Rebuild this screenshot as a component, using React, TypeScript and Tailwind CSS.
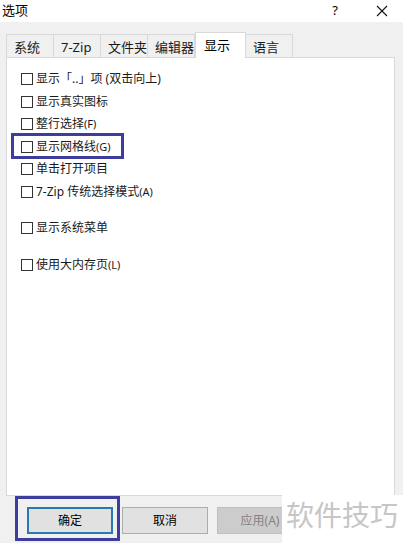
import React from 'react';

const font = { fontFamily: '"Noto Sans", "Noto Sans CJK SC", sans-serif' };

type Option = { label: string; key?: string; gapBefore?: boolean };

const options: Option[] = [
  { label: '显示「..」项 (双击向上)' },
  { label: '显示真实图标' },
  { label: '整行选择', key: '(F)' },
  { label: '显示网格线', key: '(G)' },
  { label: '单击打开项目' },
  { label: '7-Zip 传统选择模式', key: '(A)' },
  { label: '显示系统菜单', gapBefore: true },
  { label: '使用大内存页', key: '(L)', gapBefore: true },
];

const tabs = ['系统', '7-Zip', '文件夹', '编辑器', '显示', '语言'];

function Checkbox({ option }: { option: Option }) {
  return (
    <div className={`flex items-center h-[22.5px] ${option.gapBefore ? 'mt-[14px]' : ''}`}>
      <span className="w-[12px] h-[12px] border border-[#333] bg-white shrink-0" />
      <span className="ml-[3px] text-[12px] text-[#1a1a1a] leading-none">
        {option.label}
        {option.key && <span className="text-[11px]">{option.key}</span>}
      </span>
    </div>
  );
}

export default function App() {
  return (
    <div className="relative w-[403px] h-[543px] bg-[#f0f0f0] overflow-hidden flex flex-col" style={font}>
      {/* Title bar */}
      <div className="h-[22px] bg-white flex items-center pl-[2px] shrink-0">
        <span className="text-[13px] text-black">选项</span>
        <span className="ml-auto text-[13px] text-black mr-[38px]">?</span>
        <svg width="12" height="12" viewBox="0 0 12 12" className="mr-[15px]">
          <path d="M1 1 L11 11 M11 1 L1 11" stroke="#111" strokeWidth="1.1" />
        </svg>
      </div>

      {/* Tabs */}
      <div className="flex items-end h-[25px] mt-[10px] pl-[6px] shrink-0">
        {tabs.map((t) => {
          const active = t === '显示';
          return (
            <div
              key={t}
              className={
                active
                  ? 'relative z-10 h-[26px] w-[51px] -mb-px bg-white border border-b-0 border-[#d9d9d9] pl-[8px] pt-[3px] text-[13px] text-black'
                  : 'h-[23px] w-[48px] -ml-px first:ml-0 bg-[#f0f0f0] border border-b-0 border-[#d9d9d9] pl-[7px] pt-[3px] text-[13px] text-[#1a1a1a]'
              }
            >
              {t}
            </div>
          );
        })}
      </div>

      {/* Panel */}
      <div className="ml-[6px] mr-[8px] h-[439px] bg-white border border-[#d9d9d9] pt-[10px] pl-[14px] shrink-0">
        {options.map((o) => (
          <Checkbox key={o.label} option={o} />
        ))}
      </div>

      {/* Buttons */}
      <div className="flex items-center pl-[27px] mt-[11px] gap-[9px]">
        <button className="w-[86px] h-[27px] bg-[#e1e1e1] border-2 border-[#2a7ab0] text-[12px] text-black">确定</button>
        <button className="w-[86px] h-[27px] bg-[#e1e1e1] border border-[#adadad] text-[12px] text-black">取消</button>
        <button className="w-[86px] h-[27px] bg-[#cccccc] border border-[#bfbfbf] text-[12px] text-[#838383]">应用(A)</button>
      </div>

      {/* Annotation boxes */}
      <div className="absolute left-[11px] top-[133px] w-[113px] h-[26px] border-[3px] border-[#3c3d9c]" />
      <div className="absolute left-[15px] top-[496px] w-[105px] h-[45px] border-[3px] border-[#3c3d9c]" />

      {/* Watermark */}
      <div className="absolute left-[282px] top-[495px] right-0 bottom-0 bg-white flex items-start pl-[4px] pt-[2px]">
        <span className="text-[28px] leading-[36px] text-[#c6c6c6]">软件技巧</span>
      </div>
    </div>
  );
}
